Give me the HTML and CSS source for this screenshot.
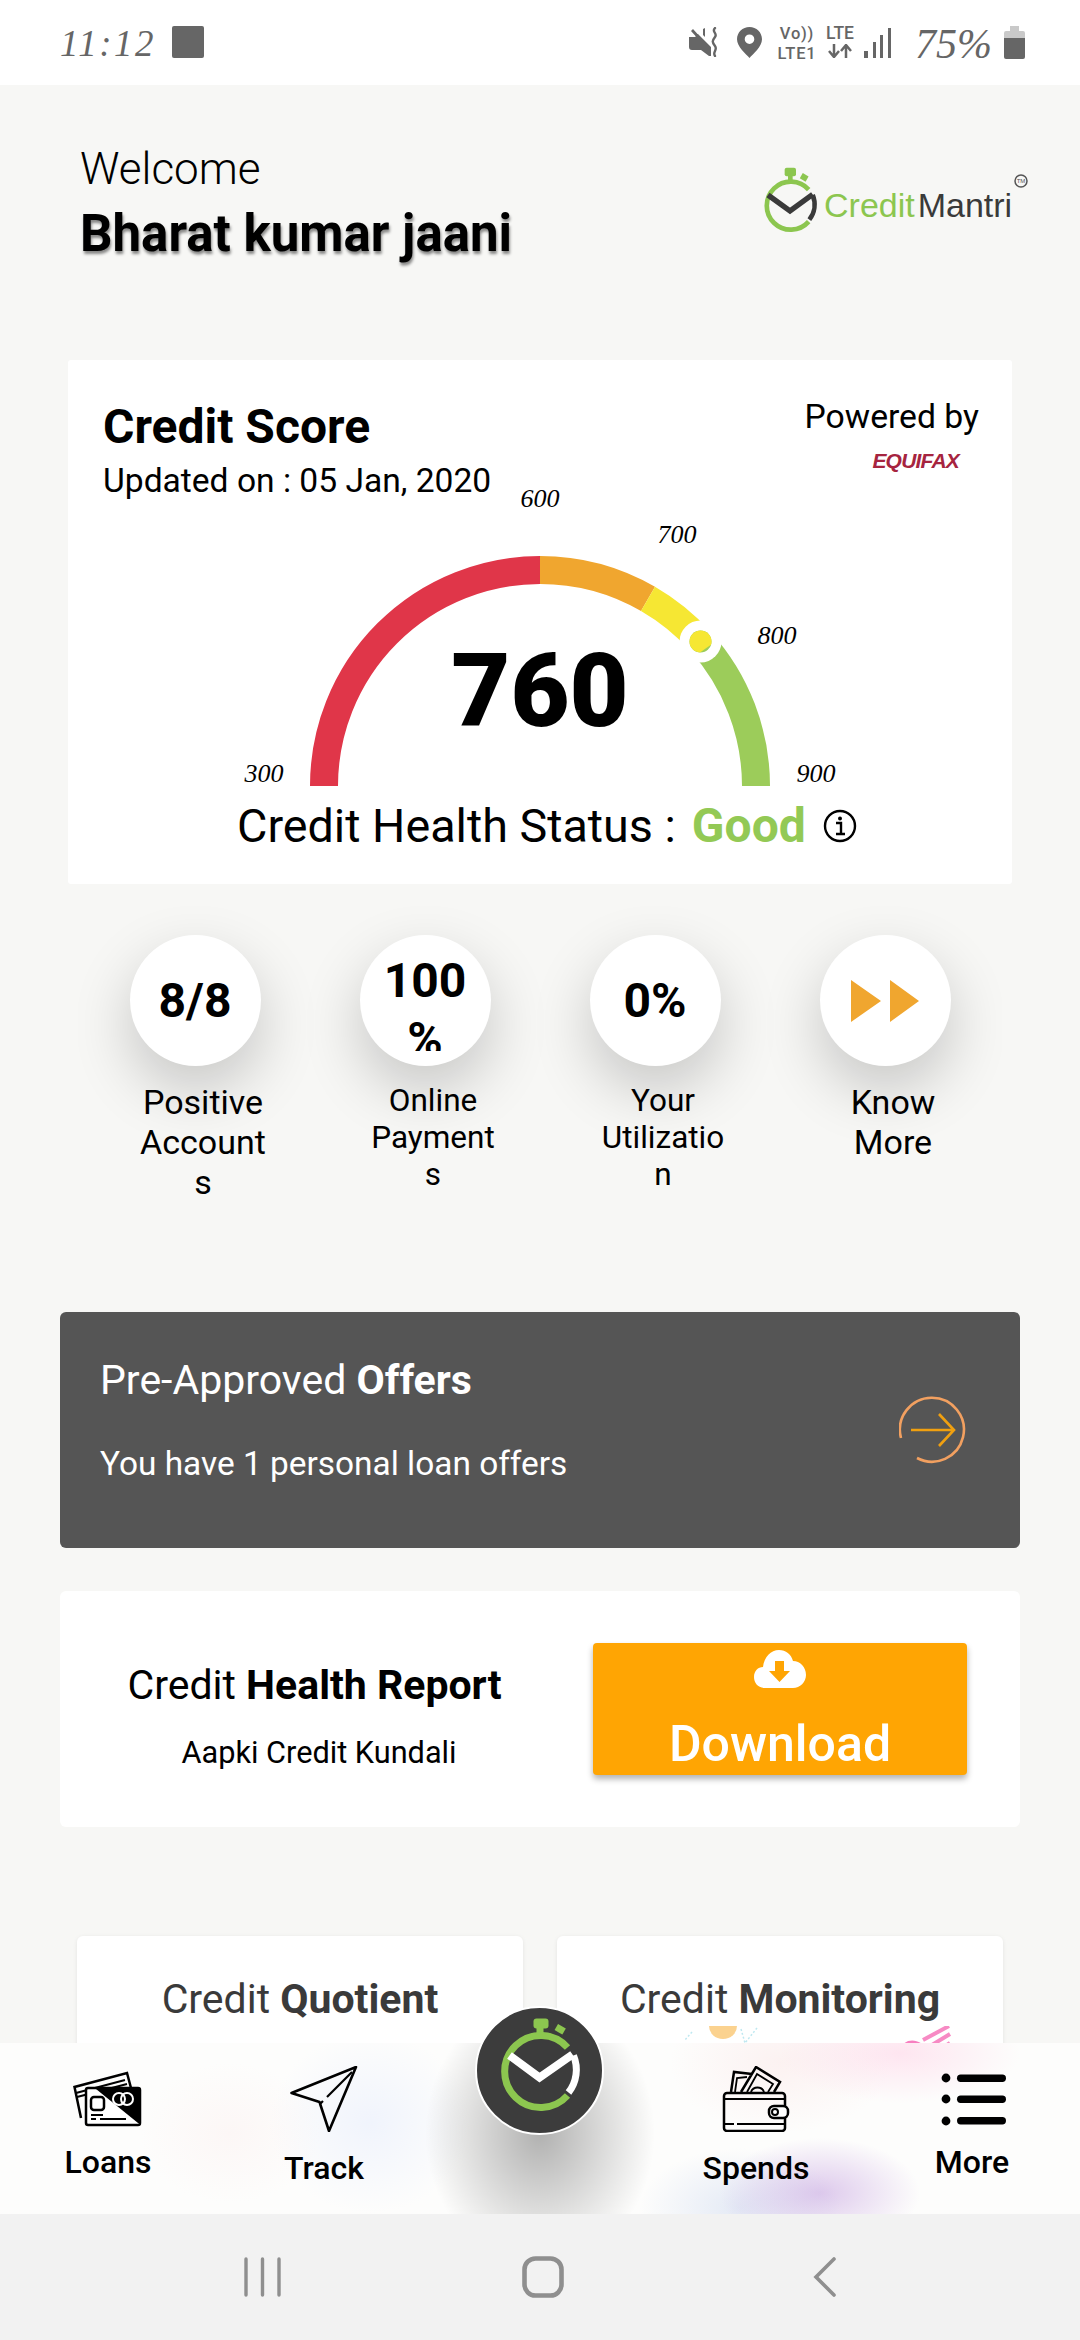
FILE: index.html
```html
<!DOCTYPE html>
<html lang="en">
<head>
<meta charset="utf-8">
<title>CreditMantri</title>
<link rel="stylesheet" href="styles.css">
</head>
<body>
<div class="app">
  <header class="status">
    <span class="status-time">11:12</span>
    <span class="status-square"></span>
    <div class="status-right">
      <svg class="ic-mute" width="30" height="30" viewBox="0 0 30 30"><path d="M0 10h6l3-3 13 13v9l-2 0-8-6H3a3 3 0 0 1-3-3zM14 2l2-1v9l-2-2zM2 4l2-2 18 20-2 2z" fill="#666"/><path d="M26 1c-4 4 3 5 0 9s-3 5 0 9-3 6 0 10" fill="none" stroke="#666" stroke-width="2.4" stroke-linecap="round"/></svg>
      <svg class="ic-pin" width="25" height="31" viewBox="0 0 25 31"><path d="M12.500 0C5.600 0 0 5.400 0 12.300 0 20 9 27 12.500 31 16 27 25 20 25 12.300 25 5.400 19.400 0 12.500 0zm0 17a4.800 4.800 0 1 1 0-9.600 4.800 4.800 0 0 1 0 9.600z" fill="#666"/></svg>
      <div class="net net-vo"><span>Vo))</span><span>LTE1</span></div>
      <div class="net net-lte"><span>LTE</span><svg width="24" height="14" viewBox="0 0 24 14"><path d="M6 0v12M1 7l5 6 5-6M18 14V2M13 7l5-6 5 6" fill="none" stroke="#666" stroke-width="2.500"/></svg></div>
      <svg class="ic-signal" width="27" height="30" viewBox="0 0 27 30"><path d="M0 23h4v7H0zM9 14h3v16H9zM16 7h3v23h-3zM24 0h3v30h-3z" fill="#666"/></svg>
      <span class="status-pct">75%</span>
      <svg class="ic-batt" width="21" height="33" viewBox="0 0 21 33"><path d="M6 0h9v5h4a2 2 0 0 1 2 2v5H0V7a2 2 0 0 1 2-2h4z" fill="#c9c9c9"/><path d="M0 12h21v19a2 2 0 0 1-2 2H2a2 2 0 0 1-2-2z" fill="#666"/></svg>
    </div>
  </header>

  <main class="main">
    <section class="welcome">
      <div class="welcome-text">
        <div class="welcome-hello">Welcome</div>
        <div class="welcome-name">Bharat kumar jaani</div>
      </div>
      <svg class="logo" width="290" height="80" viewBox="0 0 290 80">
        <g transform="translate(50 40) scale(.667)">
          <path d="M28-23A36 36 0 1 0 28 25" fill="none" stroke="#8cc64f" stroke-width="7"/>
          <path d="M34-15A37 37 0 0 1 29 22" fill="none" stroke="#3a3a3a" stroke-width="7"/>
          <path d="M-33-15L0 9 34-16" fill="none" stroke="#3a3a3a" stroke-width="8"/>
          <rect x="-8" y="-56" width="17" height="13" rx="3" fill="#8cc64f"/>
          <rect x="-3" y="-46" width="7" height="9" fill="#8cc64f"/>
          <rect x="16" y="-46" width="10" height="9" transform="rotate(30 21 -41)" fill="#8cc64f"/>
        </g>
        <text class="logo-word" x="84" y="52"><tspan class="logo-credit">Credit</tspan><tspan class="logo-mantri" dx="3">Mantri</tspan></text>
        <circle cx="281" cy="16" r="6" fill="none" stroke="#555" stroke-width="1.500"/>
        <text class="logo-tm" x="281" y="18">TM</text>
      </svg>
    </section>

    <section class="score-card">
      <div class="score-head">
        <div class="score-title">
          <h1>Credit Score</h1>
          <p>Updated on : 05 Jan, 2020</p>
        </div>
        <div class="score-power">
          <p>Powered by</p>
          <div class="equifax">EQUIFAX</div>
        </div>
      </div>
      <svg class="gauge" width="944" height="310" viewBox="0 0 944 310">
        <g fill="none" stroke-width="28">
          <path d="M256 306A216 216 0 0 1 472 90" stroke="#e03649"/>
          <path d="M472 90A216 216 0 0 1 580 118.900" stroke="#f0a62f"/>
          <path d="M580 118.900A216 216 0 0 1 632.500 161.500" stroke="#f6e733"/>
          <path d="M632.500 161.500A216 216 0 0 1 688 306" stroke="#9ccc5a"/>
        </g>
        <circle cx="632.500" cy="161.500" r="21" fill="#fff"/>
        <g transform="translate(632.500 161.500)">
          <circle r="11" fill="#9ccc5a"/>
          <path d="M10.500 3.300A11 11 0 1 0-.5 11Z" fill="#f6e733"/>
        </g>
        <text class="gauge-num" x="472" y="246">760</text>
        <text class="gauge-tick" x="472" y="27">600</text>
        <text class="gauge-tick" x="609" y="63">700</text>
        <text class="gauge-tick" x="709" y="164">800</text>
        <text class="gauge-tick" x="748" y="302">900</text>
        <text class="gauge-tick" x="196" y="302">300</text>
      </svg>
      <div class="health">
        <span>Credit Health Status :</span>
        <b>Good</b>
        <svg width="34" height="34" viewBox="0 0 34 34"><circle cx="17" cy="17" r="15" fill="none" stroke="#000" stroke-width="2.400"/><path d="M13 14h5v10M13 25h9" fill="none" stroke="#000" stroke-width="2.400"/><circle cx="17" cy="9.500" r="2" fill="#000"/></svg>
      </div>
    </section>

    <section class="stats">
      <div class="stat">
        <div class="stat-circle"><div class="stat-val">8/8</div></div>
        <div class="stat-label">Positive Accounts</div>
      </div>
      <div class="stat">
        <div class="stat-circle"><div class="stat-val">100<wbr>%</div></div>
        <div class="stat-label stat-label-sm">Online Payments</div>
      </div>
      <div class="stat">
        <div class="stat-circle"><div class="stat-val">0%</div></div>
        <div class="stat-label stat-label-sm">Your Utilization</div>
      </div>
      <div class="stat">
        <div class="stat-circle"><svg width="68" height="42" viewBox="0 0 68 42"><path d="M0 0l30 21L0 42zM39 0l29 21-29 21z" fill="#f0a62f"/></svg></div>
        <div class="stat-label">Know More</div>
      </div>
    </section>

    <section class="offers">
      <div class="offers-text">
        <h2>Pre-Approved <b>Offers</b></h2>
        <p>You have 1 personal loan offers</p>
      </div>
      <svg width="68" height="68" viewBox="0 0 68 68"><path d="M2 42A32 32 0 1 1 18 62" fill="none" stroke="#f2a060" stroke-width="2.600"/><path d="M12 34h42M40 18l15 16-15 16" fill="none" stroke="#f0a010" stroke-width="2.600"/></svg>
    </section>

    <section class="report">
      <div class="report-text">
        <h2>Credit <b>Health Report</b></h2>
        <p>Aapki Credit Kundali</p>
      </div>
      <div class="download">
        <svg width="52" height="38" viewBox="0 0 52 38"><path d="M11 38C4 38 0 33 0 27c0-6 4-10 9-10C10 7 17 0 25 0c7 0 12 4 14 11 7 0 13 6 13 14 0 7-6 13-13 13z" fill="#fff"/><path d="M21 11h9v10h6L25.500 32 15 21h6z" fill="#ffa503"/></svg>
        <span>Download</span>
      </div>
    </section>

    <section class="tiles">
      <div class="tile">
        <h3>Credit <b>Quotient</b></h3>
      </div>
      <div class="tile">
        <h3>Credit <b>Monitoring</b></h3>
        <svg class="tile-art" width="446" height="40" viewBox="0 0 446 40">
          <path d="M152 0h28a14 13 0 0 1-28 0z" fill="#fbd28f"/>
          <path d="M135 6l-8 9M200 2l-12 15M184 3l4 14" stroke="#bfe8f0" stroke-width="1.500" stroke-dasharray="2 2" fill="none"/>
          <path d="M345 20c4-7 14-7 20-2v8h-20z" fill="#f77fc0"/>
          <path d="M366 14L392 0M370 22L393 8M382 24L393 17" stroke="#f78ac4" stroke-width="4" fill="none"/>
        </svg>
      </div>
    </section>
  </main>

  <nav class="nav">
    <div class="nav-item">
      <svg width="70" height="56" viewBox="0 0 70 56">
        <path d="M8 47L1.500 16 54 2l4 15" fill="none" stroke="#000" stroke-width="2.500"/>
        <path d="M3 22L52 9M4 26L54 13" stroke="#000" stroke-width="2" fill="none"/>
        <rect x="13" y="17" width="54" height="37" rx="2" fill="#fff" stroke="#000" stroke-width="2.500"/>
        <path d="M23 18H67V52H65z" fill="#000"/>
        <rect x="18" y="26" width="13" height="13" rx="3" fill="#fff" stroke="#000" stroke-width="2.500"/>
        <circle cx="46" cy="28" r="6" fill="none" stroke="#fff" stroke-width="2"/>
        <circle cx="54" cy="28" r="6" fill="none" stroke="#fff" stroke-width="2"/>
        <path d="M18 44h12M18 48h5M27 48h26" stroke="#000" stroke-width="2" fill="none"/>
      </svg>
      <span>Loans</span>
    </div>
    <div class="nav-item nav-item-tall">
      <svg width="68" height="66" viewBox="0 0 68 66"><path d="M66 1L1.500 27 29.500 36 39 65z" fill="none" stroke="#000" stroke-width="2.600" stroke-linejoin="round"/><path d="M62 6L37 31M33 35l-3 3" stroke="#000" stroke-width="2.200" fill="none"/></svg>
      <span>Track</span>
    </div>
    <div class="nav-spacer"></div>
    <div class="nav-item nav-item-tall">
      <svg width="68" height="66" viewBox="0 0 68 66">
        <path d="M9 26l3-20 18 2M19 26l15-25 24 15-6 10" fill="none" stroke="#000" stroke-width="2.500"/>
        <path d="M13 26l2-14 10-1M25 26l10-18 16 10-5 8" fill="none" stroke="#000" stroke-width="1.800"/>
        <path d="M29 26a7 7 0 0 1 13 0" fill="none" stroke="#000" stroke-width="2"/>
        <rect x="2" y="27" width="61" height="38" rx="3" fill="none" stroke="#000" stroke-width="2.500"/>
        <path d="M2 33h61M3 58h9M15 58h47" stroke="#000" stroke-width="2.200" fill="none"/>
        <rect x="47" y="40" width="19" height="12" rx="5" fill="#fff" stroke="#000" stroke-width="2.500"/>
        <circle cx="53" cy="46" r="3" fill="none" stroke="#000" stroke-width="2"/>
      </svg>
      <span>Spends</span>
    </div>
    <div class="nav-item">
      <svg width="68" height="56" viewBox="0 0 68 56"><g fill="#000"><circle cx="8" cy="7" r="4.400"/><circle cx="8" cy="28" r="4.400"/><circle cx="8" cy="50" r="4.400"/><rect x="19" y="3.500" width="49" height="7.500" rx="3.700"/><rect x="19" y="24.500" width="49" height="7.500" rx="3.700"/><rect x="19" y="46" width="49" height="7.500" rx="3.700"/></g></svg>
      <span>More</span>
    </div>
    <div class="fab">
      <svg width="125" height="125" viewBox="-62.500 -62.500 125 125">
        <path d="M28-23A36 36 0 1 0 28 25" fill="none" stroke="#8cc64f" stroke-width="7"/>
        <path d="M34-15A37 37 0 0 1 29 22" fill="none" stroke="#fff" stroke-width="7"/>
        <path d="M-30-15L0 7 33-16" fill="none" stroke="#fff" stroke-width="8"/>
        <rect x="-6" y="-52" width="15" height="10" rx="3" fill="#8cc64f"/>
        <rect x="-3" y="-44" width="7" height="8" fill="#8cc64f"/>
        <rect x="16" y="-45" width="9" height="7" transform="rotate(30 20 -41)" fill="#8cc64f"/>
      </svg>
    </div>
  </nav>

  <footer class="sysbar">
    <svg class="sys-recent" width="37" height="40" viewBox="0 0 37 40"><path d="M2 2v36M18.500 2v36M35 2v36" stroke="#8f8f8f" stroke-width="3.400" stroke-linecap="round" fill="none"/></svg>
    <svg class="sys-home" width="42" height="42" viewBox="0 0 42 42"><rect x="2.500" y="2.500" width="37" height="37" rx="11" fill="none" stroke="#8f8f8f" stroke-width="4.600"/></svg>
    <svg class="sys-back" width="23" height="40" viewBox="0 0 23 40"><path d="M21 2L3 20l18 18" stroke="#8f8f8f" stroke-width="3.600" stroke-linecap="round" fill="none"/></svg>
  </footer>
</div>
</body>
</html>
```
FILE: styles.css
```css
* { box-sizing: border-box; }
html, body { margin: 0; padding: 0; }
body { width: 1080px; height: 2340px; overflow: hidden; font-family: Roboto, "Liberation Sans", sans-serif; color: #000; background: #f7f7f5; }
h1, h2, h3, p { margin: 0; font-weight: 400; }
b { font-weight: 700; }
.app { width: 1080px; height: 2340px; display: flex; flex-direction: column; }

.status { height: 85px; flex: none; background: #fff; display: flex; align-items: flex-start; padding-left: 60px; color: #666; }
.status-time { font: italic 400 37px/1 "Liberation Serif", serif; letter-spacing: 2.500px; margin-top: 25px; width: 112px; }
.status-square { width: 32px; height: 32px; margin-top: 26px; background: #666; border-radius: 2px; }
.status-right { margin-left: auto; display: flex; align-items: flex-start; padding-right: 55px; padding-top: 27px; }
.ic-mute { margin-right: 18px; }
.ic-pin { margin-right: 16px; }
.net { display: flex; flex-direction: column; align-items: center; font: 500 16.500px/19.500px Roboto, sans-serif; color: #666; }
.net-vo { width: 38px; margin: -3px 8px 0 0; letter-spacing: .8px; }
.net-lte { width: 32px; margin: -3px 8px 0 0; font-size: 17.500px; }
.net-lte svg { margin-top: 0; }
.ic-signal { margin-top: 1px; margin-right: 24px; }
.status-pct { font: italic 400 42px/34px "Liberation Serif", serif; width: 89px; }
.ic-batt { margin-top: -1px; }

.main { flex: 1; min-height: 0; overflow: hidden; }

.welcome { height: 275px; padding: 58px 50px 0 80px; display: flex; justify-content: space-between; align-items: flex-start; }
.welcome-hello { font-size: 44px; line-height: 52px; font-weight: 300; }
.welcome-name { font-size: 51px; line-height: 56px; font-weight: 700; margin-top: 11px; text-shadow: 1px 3px 3px rgba(0,0,0,.45); }
.logo { margin-top: 22px; }
.logo-word { font: 400 34px "Liberation Sans", sans-serif; }
.logo-credit { fill: #8cc64f; }
.logo-mantri { fill: #3a3a3a; }
.logo-tm { font: 400 6px "Liberation Sans", sans-serif; fill: #555; text-anchor: middle; }

.score-card { margin: 0 68px; height: 524px; background: #fff; border-radius: 3px; }
.score-head { height: 120px; padding: 37px 33px 0 35px; display: flex; justify-content: space-between; align-items: flex-start; }
.score-title { padding-top: 3px; }
.score-title h1 { font-size: 48px; line-height: 54px; font-weight: 700; }
.score-title p { font-size: 33.600px; line-height: 40px; margin-top: 7px; }
.score-power p { font-size: 33.700px; line-height: 40px; }
.equifax { font: italic 700 21px/20px "Liberation Sans", sans-serif; color: #a6243f; text-align: right; margin: 14px 20px 0 0; letter-spacing: -.8px; }
.gauge { display: block; }
.gauge-num { font: 900 102px Roboto, sans-serif; text-anchor: middle; }
.gauge-tick { font: italic 400 26px "Liberation Serif", serif; text-anchor: middle; }
.health { margin-top: 8px; padding-left: 169px; display: flex; align-items: center; font-size: 46.700px; line-height: 56px; }
.health b { color: #93c955; margin-left: 16px; font-size: 48px; }
.health svg { margin-left: 17px; }

.stats { margin: 11px 78px 77px; height: 340px; padding: 40px 2px 0; display: flex; overflow: hidden; }
.stat { width: 230px; flex: none; display: flex; flex-direction: column; align-items: center; }
.stat-circle { width: 131px; height: 131px; flex: none; border-radius: 50%; background: #fff; box-shadow: 0 24px 60px rgba(0,0,0,.2); display: flex; align-items: center; justify-content: center; }
.stat-val { width: 92px; max-height: 100px; overflow: hidden; font-size: 48px; line-height: 59px; font-weight: 700; text-align: center; }
.stat-label { width: 131px; margin: 16px 0 0 16px; font-size: 34px; line-height: 40px; text-align: center; overflow-wrap: anywhere; }
.stat-label-sm { font-size: 31.500px; line-height: 37px; }

.offers { margin: 0 60px 43px; height: 236px; padding: 45px 53px 0 40px; background: #555; border-radius: 6px; color: #fff; display: flex; justify-content: space-between; }
.offers svg { margin-top: 39px; }
.offers h2 { font-size: 41px; line-height: 47px; }
.offers p { font-size: 33.400px; line-height: 40px; margin-top: 40px; }

.report { margin: 0 60px 109px; height: 236px; background: #fff; border-radius: 6px; display: flex; padding-right: 53px; }
.report-text { flex: 1; padding-top: 71px; text-align: center; margin-right: 15px; }
.report-text h2 { font-size: 41px; line-height: 47px; padding-right: 9px; }
.report-text p { font-size: 30.700px; line-height: 35px; margin-top: 26px; }
.download { width: 374px; height: 132px; margin-top: 52px; background: #ffa503; border-radius: 4px; box-shadow: 0 4px 6px rgba(0,0,0,.3); display: flex; flex-direction: column; align-items: center; padding-top: 7px; color: #fff; }
.download svg { flex: none; }
.download span { font-size: 50px; line-height: 58px; font-weight: 500; margin-top: 27px; }

.tiles { margin: 0 77px; display: flex; gap: 34px; }
.tile { width: 446px; height: 300px; padding-top: 40px; background: #fff; border-radius: 6px; box-shadow: 0 1px 4px rgba(0,0,0,.08); text-align: center; }
.tile h3 { font-size: 41px; line-height: 47px; color: #3a3a3a; }
.tile-art { display: block; margin-top: 3px; }

.nav { height: 171px; flex: none; position: relative; display: grid; grid-template-columns: repeat(5, 216px); background:
  radial-gradient(ellipse 115px 135px at 540px 90px, rgba(0,0,0,.3), rgba(0,0,0,0) 100%),
  radial-gradient(ellipse 100px 55px at 820px 150px, rgba(190,150,220,.5), rgba(190,150,220,0) 100%),
  radial-gradient(ellipse 100px 60px at 740px 165px, rgba(190,205,235,.4), rgba(190,205,235,0) 100%),
  radial-gradient(ellipse 120px 50px at 900px 10px, rgba(255,200,225,.45), rgba(255,200,225,0) 100%),
  radial-gradient(ellipse 110px 70px at 780px 20px, rgba(250,225,225,.4), rgba(250,225,225,0) 100%),
  radial-gradient(ellipse 90px 70px at 230px 90px, rgba(250,232,232,.3), rgba(250,232,232,0) 100%),
  radial-gradient(ellipse 100px 90px at 370px 80px, rgba(235,240,252,.7), rgba(235,240,252,0) 100%),
  #fdfdfc; }
.nav-item { display: flex; flex-direction: column; align-items: center; padding-top: 28px; font-size: 32px; line-height: 37px; font-weight: 500; }
.nav-item span { margin-top: 17px; }
.nav-item-tall { padding-top: 23px; }
.nav-item-tall span { margin-top: 18px; }
.fab { position: absolute; left: 475px; top: -37px; width: 129px; height: 129px; border-radius: 50%; background: #3c3c3c; border: 2px solid #fff; }
.fab svg { display: block; }

.sysbar { height: 126px; flex: none; background: #f2f2f2; display: flex; align-items: center; padding-left: 244px; }
.sys-home { margin-left: 241px; }
.sys-back { margin-left: 249px; }
```
